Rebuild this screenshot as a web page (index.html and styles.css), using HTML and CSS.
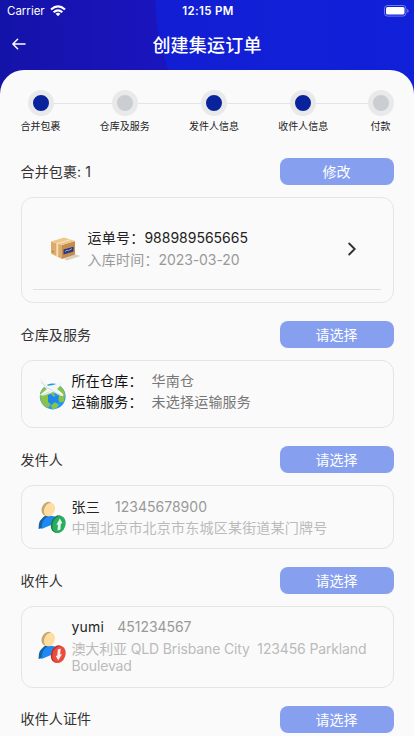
FILE: index.html
```html
<!DOCTYPE html>
<html lang="zh-CN">
<head>
<meta charset="utf-8">
<title>创建集运订单</title>
<link rel="stylesheet" href="styles.css">
</head>
<body>
<div class="screen">
  <header class="top">
    <div class="status">
      <span class="carrier">Carrier
        <svg width="16" height="12" viewBox="0 0 16 12"><g fill="none" stroke="#fff" stroke-width="2.2"><path d="M1 4.500Q8-1.600 15 4.500"/><path d="M3.600 7.300Q8 3.400 12.400 7.300"/></g><path d="M5.600 8.800Q8 6.900 10.400 8.800L8 11.300Z" fill="#fff"/></svg>
      </span>
      <span class="time">12:15 PM</span>
      <svg class="battery" width="25" height="12" viewBox="0 0 25 12"><rect x=".5" y=".5" width="21.5" height="10.6" rx="3" fill="none" stroke="#fff" stroke-opacity=".4"/><rect x="2" y="2" width="18.5" height="7.6" rx="1.6" fill="#fff"/><path d="M23.3 4v3.8q1.3-.6 1.3-1.9T23.3 4z" fill="#fff" fill-opacity=".5"/></svg>
    </div>
    <div class="nav">
      <svg class="back" width="14" height="12" viewBox="0 0 14 12" fill="none" stroke="#fff" stroke-width="1.5" stroke-linecap="round" stroke-linejoin="round"><path d="M13 6H1M5.6 1.2L.9 6l4.7 4.8"/></svg>
      <h1>创建集运订单</h1>
    </div>
  </header>

  <main class="sheet">
    <ol class="steps">
      <li class="step done"><i class="dot"></i>合并包裹</li>
      <li class="step"><i class="dot"></i>仓库及服务</li>
      <li class="step done"><i class="dot"></i>发件人信息</li>
      <li class="step done"><i class="dot"></i>收件人信息</li>
      <li class="step"><i class="dot"></i>付款</li>
    </ol>

    <section>
      <div class="head"><h2>合并包裹: 1</h2><button>修改</button></div>
      <div class="card parcels">
        <div class="parcel">
          <svg class="box" width="31" height="24" viewBox="0 0 31 24"><path d="M14 22l10-5 6.500 2L17 23.500z" fill="#d9d3bd"/><path d="M1 4.500L12 8v14L1 16.500z" fill="#dcab6c"/><path d="M12 8l13-4v13.500L12 22z" fill="#c58d4b"/><path d="M1 4.500L14 .5l11 3.500-13 4z" fill="#eec68b"/><path d="M6.300 6.200L19.500 2.200l2 .7L8.300 6.900V20l-2-1z" fill="#f7ddb4"/><path d="M13.500 12.500l10-2.800v4.700l-10 3z" fill="#26368f"/><path d="M15 14.800l2-1.700 1.500.6 3.500-2.100" fill="none" stroke="#a7b37a"/><path d="M2 14l2 1" stroke="#a57640"/></svg>
          <div class="info">
            <p class="number">运单号：<span class="latin">988989565665</span></p>
            <p class="muted">入库时间：<span class="latin">2023-03-20</span></p>
          </div>
          <svg class="chevron" width="8" height="14" viewBox="0 0 8 14" fill="none" stroke="#333" stroke-width="1.900" stroke-linecap="round"><path d="M1.200 1.500L6.700 7l-5.500 5.500"/></svg>
        </div>
      </div>
    </section>

    <section>
      <div class="head"><h2>仓库及服务</h2><button>请选择</button></div>
      <div class="card service">
        <svg width="28" height="32" viewBox="0 0 28 32"><circle cx="13.700" cy="18.500" r="12.900" fill="#2196f3"/><path d="M1 17q1-6 6-9l4-1 3 2-2 4 3 2 1 4-4-1-2 3 2 5-3 4Q1 27 1 17zM18 6.500q7 3 8 10l-1 7-4 1-3-5 1-4-4-3zM12 27l4-3 4 3-3 3.500-4 .5z" fill="#8bc34a"/><path d="M9 17l3-1 3 3 5-2-1 8-4-1-2 3-4-3z" fill="#1d87ed"/><path d="M0 0l4 1.500L9 8l5-1 8-2.500 2 .5-6 6 5 4q2 2 1 3-2 0-4-1l-6-3-9 3.500-4-.5 7-6-6-4.500z" fill="#f3f6f8"/><path d="M2 4l6 5.500 5 3 9 5M3 17.500l8-4" fill="none" stroke="#c5d0d7" stroke-width=".8"/></svg>
        <dl>
          <dt>所在仓库：</dt><dd>华南仓</dd>
          <dt>运输服务：</dt><dd>未选择运输服务</dd>
        </dl>
      </div>
    </section>

    <section>
      <div class="head"><h2>发件人</h2><button>请选择</button></div>
      <div class="card contact">
        <svg width="28" height="33" viewBox="0 0 28 33"><path d="M.500 28q-.5-10 8-14l6 2-10 11z" fill="#17649c"/><path d="M3.500 28q0-10 7-13 6-1 9 3l-4 5z" fill="#1e88f5"/><ellipse cx="9.500" cy="7.800" rx="5.700" ry="7.300" transform="rotate(25 9.500 7.800)" fill="#c4aa73"/><ellipse cx="11.500" cy="8.600" rx="5.200" ry="7" transform="rotate(25 11.500 8.600)" fill="#ffdda0"/><ellipse cx="19.500" cy="23" rx="6.400" ry="9" transform="rotate(18 19.500 23)" fill="#1b7d43"/><ellipse cx="21" cy="23.500" rx="6.400" ry="8.800" transform="rotate(18 21 23.500)" fill="#27ae60"/><path d="M21.800 17.500l2.500 4.500-1.500.8-.4 5.800-2.900 1 .5-6-1.700.5z" fill="#eef3ef"/></svg>
        <div class="info">
          <p class="name">张三 <span class="phone latin">12345678900</span></p>
          <p class="address">中国北京市北京市东城区某街道某门牌号</p>
        </div>
      </div>
    </section>

    <section>
      <div class="head"><h2>收件人</h2><button>请选择</button></div>
      <div class="card contact receiver">
        <svg width="28" height="33" viewBox="0 0 28 33"><path d="M.500 28q-.5-10 8-14l6 2-10 11z" fill="#17649c"/><path d="M3.500 28q0-10 7-13 6-1 9 3l-4 5z" fill="#1e88f5"/><ellipse cx="9.500" cy="7.800" rx="5.700" ry="7.300" transform="rotate(25 9.500 7.800)" fill="#c4aa73"/><ellipse cx="11.500" cy="8.600" rx="5.200" ry="7" transform="rotate(25 11.500 8.600)" fill="#ffdda0"/><ellipse cx="19.500" cy="23" rx="6.400" ry="9" transform="rotate(18 19.500 23)" fill="#b83327"/><ellipse cx="21" cy="23.500" rx="6.400" ry="8.800" transform="rotate(18 21 23.500)" fill="#e94b3c"/><path d="M20.300 29.500l-2.500-4.500 1.500-.6.5-5.800 2.900-1-.5 6 1.800-.5z" fill="#f4eeee"/></svg>
        <div class="info">
          <p class="name">yumi <span class="phone latin">451234567</span></p>
          <p class="address">澳大利亚 QLD Brisbane City&nbsp; 123456 Parkland Boulevad</p>
        </div>
      </div>
    </section>

    <section>
      <div class="head"><h2>收件人证件</h2><button>请选择</button></div>
    </section>
  </main>
</div>
</body>
</html>
```
FILE: styles.css
```css
* { box-sizing: border-box; margin: 0; padding: 0; }
body { overflow: hidden; font-family: Inter, "Noto Sans CJK SC", sans-serif; }
svg { display: block; flex: none; }

.screen {
  height: 736px;
  overflow: hidden;
  background:
    radial-gradient(circle 190px at 345px 0, rgba(16, 32, 216, .8) 189px, transparent 190px),
    linear-gradient(90deg, #1413a8 0, #1a14bc 36%, #1719c4 46%, #1420dc 100%);
}
.top { height: 70px; color: #fff; }
.status {
  height: 22px;
  padding: 0 5px 0 7px;
  display: grid;
  grid-template-columns: 1fr auto 1fr;
  align-items: center;
  font-size: 11.500px;
}
.carrier { display: flex; align-items: center; gap: 5px; }
.time { font-weight: 600; letter-spacing: .35px; }
.battery { justify-self: end; }
.nav { height: 48px; display: grid; grid-template-columns: 1fr auto 1fr; align-items: center; padding: 0 12px; }
.back { margin-top: -4px; }
h1 { font-size: 18px; font-weight: 500; letter-spacing: .2px; line-height: 26px; }

.sheet {
  height: 666px;
  padding: 20px 20.500px 0;
  overflow: hidden;
  border-radius: 24px 24px 0 0;
  background: #fafafa;
}
.steps {
  position: relative;
  display: flex;
  justify-content: space-between;
  height: 68px;
  list-style: none;
}
.steps::before {
  content: "";
  position: absolute;
  left: 20px;
  right: 13px;
  top: 13px;
  height: 1px;
  background: #e4e4e4;
}
.step {
  position: relative;
  display: flex;
  flex-direction: column;
  align-items: center;
  gap: 2px;
  min-width: 26px;
  font-size: 10px;
  line-height: 16px;
  color: #222;
}
.dot { width: 26px; height: 26px; border: 5px solid #e9e9e9; border-radius: 50%; background: #cacdd2; }
.done .dot { background: #09239d; }

.head { display: flex; justify-content: space-between; align-items: center; height: 27px; margin-bottom: 12px; }
h2 { padding-bottom: 2px; font-size: 14px; font-weight: 400; letter-spacing: .15px; color: #333; }
button {
  width: 114px;
  height: 27px;
  border: 0;
  border-radius: 8px;
  background: #869fef;
  color: #fff;
  font: 14px/27px Inter, "Noto Sans CJK SC", sans-serif;
}
.card {
  display: flex;
  margin-bottom: 18px;
  border: 1px solid #e4e4e4;
  border-radius: 12px;
  font-size: 14px;
  letter-spacing: .22px;
  color: #222;
}
.latin { letter-spacing: 0; }
.parcels { height: 106px; padding: 0 12px 12px 11px; }
.parcel { flex: 1; display: flex; align-items: center; padding: 11px 25px 0 17px; border-bottom: 1px solid #e0e0e0; }
.parcel .info { flex: 1; margin-left: 7px; line-height: 22px; }
.number { color: #222; }
.muted { color: #999; }
.muted .latin { letter-spacing: -.1px; }

.service { height: 68px; padding: 9px 17px; gap: 5px; }
.service svg { margin-top: 8px; }
dl { display: grid; grid-template-columns: 80px auto; line-height: 21px; align-content: start; }
dt { color: #111; }
dd { color: #777; }

.contact { height: 64px; padding: 10px 17px 0; gap: 5px; }
.contact svg { margin: 5px 1px 0 -1px; }
.contact .name { line-height: 22px; }
.contact .address { line-height: 20px; color: #bbb; }
.phone { margin-left: 11px; color: #999; }
.receiver { height: 81.500px; padding-top: 9px; }
.receiver svg { margin-top: 15px; }
.receiver .info { width: 304px; }
.receiver .phone { margin-left: 9px; letter-spacing: -.05px; }
.receiver .address { padding-top: 2px; line-height: 17px; letter-spacing: -.14px; }
```
